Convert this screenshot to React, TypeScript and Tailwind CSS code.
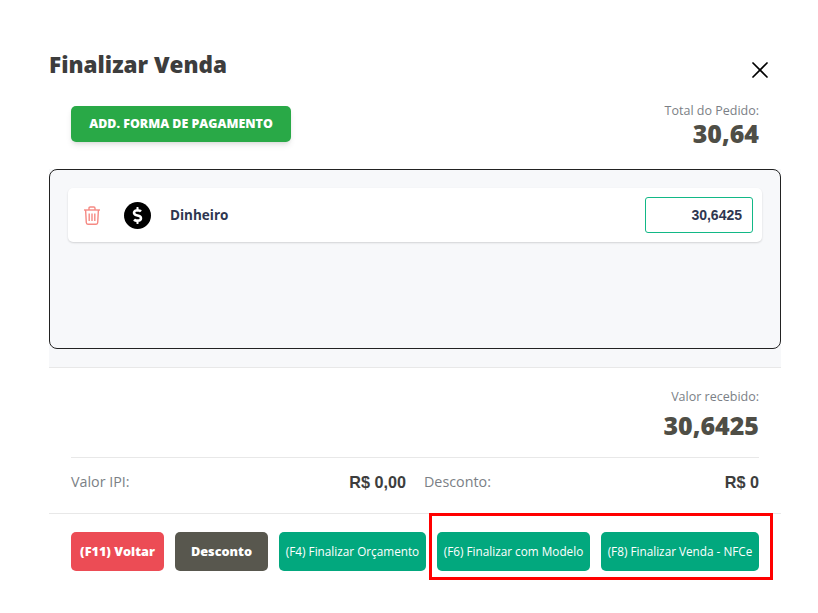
import { X } from 'lucide-react'
import { FaDollarSign } from 'react-icons/fa'

const actions = [
  { label: '(F11) Voltar', width: 'w-[93px]', color: 'bg-[#ec4c55]', heavy: true },
  { label: 'Desconto', width: 'w-[93px]', color: 'bg-[#58574e]', heavy: true },
  { label: '(F4) Finalizar Orçamento', width: 'w-[147px]', color: 'bg-[#02a87e]', heavy: false },
  { label: '(F6) Finalizar com Modelo', width: 'w-[153px]', color: 'bg-[#02a87e]', heavy: false },
  { label: '(F8) Finalizar Venda - NFCe', width: 'w-[158px]', color: 'bg-[#02a87e]', heavy: false },
]

function TrashIcon() {
  return (
    <svg width="18" height="19" viewBox="0 0 18 19" fill="none" stroke="#f58a84" strokeWidth="1.4">
      <path d="M1 4h16" />
      <path d="M6 4V2.2C6 1.5 6.5 1 7.2 1h3.6c.7 0 1.2.5 1.2 1.2V4" />
      <path d="M2.6 4l.7 12.6c0 .9.7 1.6 1.6 1.6h8.2c.9 0 1.6-.7 1.6-1.6L15.4 4" />
      <path d="M6.2 7.5v7.5M9 7.5v7.5M11.8 7.5v7.5" />
    </svg>
  )
}

export default function App() {
  return (
    <div className="relative h-[613px] w-[818px] overflow-hidden bg-white pl-[49px] pr-[37px] font-['Open_Sans',sans-serif]">
      {/* Header */}
      <div className="flex h-[106px] items-start justify-between pt-[48px]">
        <h1 className="text-[22.5px] leading-[34px] font-extrabold text-[#3d3d3d]">Finalizar Venda</h1>
        <button className="mt-[8px] mr-[7px] text-black">
          <X size={28} strokeWidth={1.5} />
        </button>
      </div>

      {/* Add payment + total */}
      <div className="flex h-[63px] items-start justify-between pr-[22px] pl-[22px]">
        <button className="h-[36px] w-[220px] rounded-[5px] bg-[#29a947] text-[12.4px] font-extrabold text-white shadow-md">
          ADD. FORMA DE PAGAMENTO
        </button>
        <div className="-mt-[4px] text-right">
          <p className="text-[12.5px] leading-[18px] text-[#7b7f86]">Total do Pedido:</p>
          <p className="text-[25px] leading-[26px] font-extrabold text-[#4f4e46]">30,64</p>
        </div>
      </div>

      {/* Payment list */}
      <div className="h-[199px] border-b border-[#e8e8e8] bg-[#f7f8fa]">
        <div className="h-[180px] rounded-[8px] border border-[#222] p-[18px]">
          <div className="flex h-[54px] items-center rounded-[5px] bg-white pr-[9px] pl-[15px] shadow-[0_1px_2px_rgba(0,0,0,0.15)]">
            <TrashIcon />
            <span className="ml-[23px] flex h-[27px] w-[27px] items-center justify-center rounded-full bg-black text-white">
              <FaDollarSign size={17} />
            </span>
            <span className="ml-[19px] text-[13.5px] font-bold text-[#2e3650]">Dinheiro</span>
            <div className="ml-auto flex h-[36px] w-[108px] items-center justify-end rounded-[3px] border border-[#12b886] bg-white pr-[10px] font-['Liberation_Sans',sans-serif] text-[14px] font-bold text-[#2e3650]">
              30,6425
            </div>
          </div>
        </div>
      </div>

      {/* Received + totals */}
      <div className="h-[146px] border-b border-[#e8e8e8] px-[22px]">
        <div className="flex h-[90px] flex-col items-end border-b border-[#e8e8e8] pt-[20px]">
          <p className="text-[12.5px] leading-[18px] text-[#7b7f86]">Valor recebido:</p>
          <p className="mt-[3px] text-[25px] leading-[32px] font-extrabold text-[#4f4e46]">30,6425</p>
        </div>
        <div className="flex h-[48px] items-center text-[14.3px] text-[#7b7f86]">
          <div className="flex w-[335px] items-center justify-between">
            <span>Valor IPI:</span>
            <span className="font-['Liberation_Sans',sans-serif] text-[16.2px] font-bold text-[#3d3d3d]">R$ 0,00</span>
          </div>
          <div className="ml-[18px] flex flex-1 items-center justify-between">
            <span>Desconto:</span>
            <span className="font-['Liberation_Sans',sans-serif] text-[16.2px] font-bold text-[#3d3d3d]">R$ 0</span>
          </div>
        </div>
      </div>

      {/* Actions */}
      <div className="flex gap-[11px] pt-[18px] pl-[22px]">
        {actions.map((a) => (
          <button
            key={a.label}
            className={`h-[39px] ${a.width} whitespace-nowrap rounded-[5px] text-white ${a.color} ${
              a.heavy ? 'text-[12.7px] font-extrabold' : 'pt-[1px] text-[11.75px] font-normal'
            }`}
          >
            {a.label}
          </button>
        ))}
      </div>

      {/* Red highlight over the last two buttons */}
      <div className="absolute top-[513px] left-[429px] h-[67px] w-[344px] border-[3px] border-[#ff0000]" />
    </div>
  )
}
